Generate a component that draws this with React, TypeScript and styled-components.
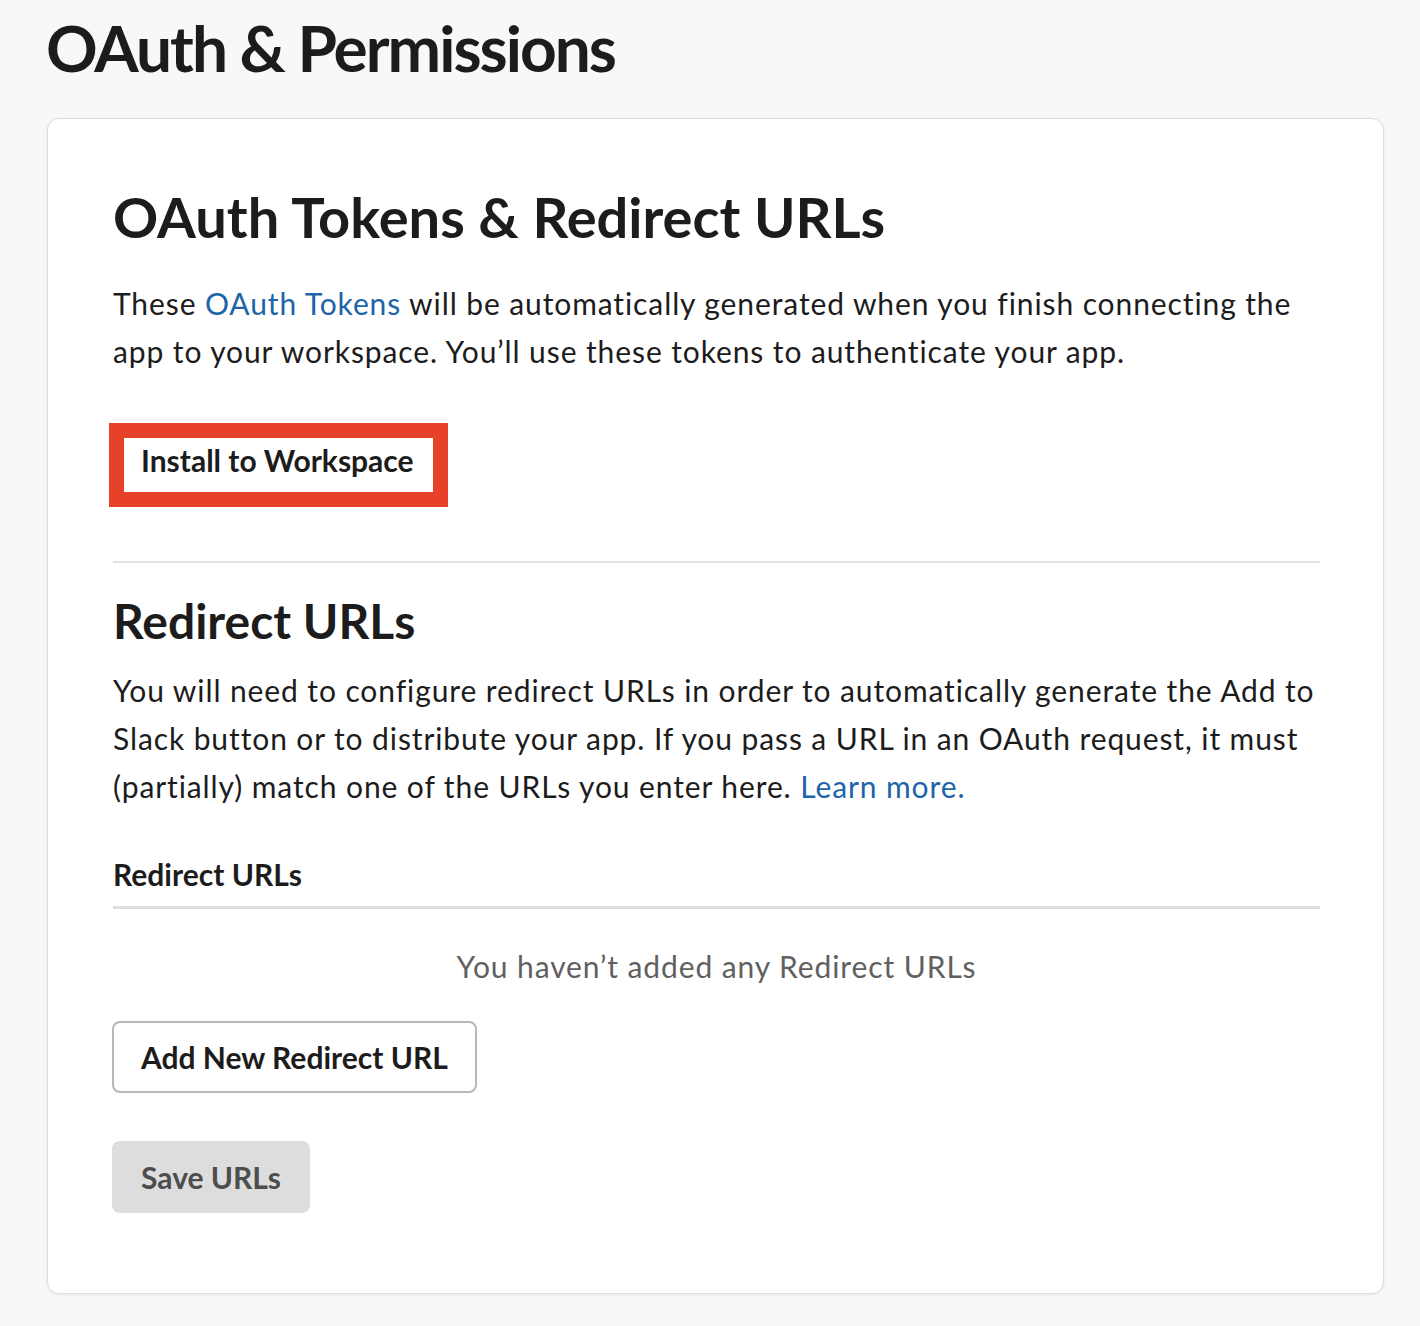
import React from "react";
import styled, { createGlobalStyle } from "styled-components";

const GlobalStyle = createGlobalStyle`
  html, body {
    margin: 0;
    padding: 0;
    background: #f8f8f8;
  }
  body {
    font-family: Lato, "Noto Sans", "Liberation Sans", sans-serif;
    color: #1d1c1d;
    -webkit-font-smoothing: antialiased;
  }
`;

const Page = styled.main`
  width: 1420px;
  min-height: 1326px;
  box-sizing: border-box;
  padding: 8px 36px 30px 47px;
`;

const PageTitle = styled.h1`
  margin: 0 0 30px -1px;
  font-size: 64px;
  line-height: 80px;
  font-weight: 700;
  letter-spacing: -2px;
  color: #1d1c1d;
`;

const Card = styled.section`
  background: #fff;
  border: 1px solid #dddddd;
  border-radius: 12px;
  box-shadow: 0 1px 3px rgba(0, 0, 0, 0.08);
  padding: 62px 63px 80px 65px;
`;

const SectionTitle = styled.h2`
  margin: 0 0 26px;
  font-size: 56px;
  line-height: 72px;
  font-weight: 700;
  color: #1d1c1d;
`;

const SubTitle = styled.h3`
  margin: 0 0 17px;
  font-size: 48px;
  line-height: 56px;
  font-weight: 700;
  color: #1d1c1d;
`;

const Text = styled.p`
  margin: 0;
  font-size: 30px;
  line-height: 48px;
  letter-spacing: 0.9px;
  color: #1d1c1d;
`;

const Link = styled.a`
  color: #1d64a8;
  text-decoration: none;
`;

const InstallButton = styled.button`
  margin: 48px 0 0 -4px;
  align-self: flex-start;
  height: 84px;
  padding: 0 19px 11px 17px;
  border: 15px solid #e8412a;
  background: #fff;
  font-family: inherit;
  font-size: 30px;
  line-height: 38px;
  font-weight: 700;
  color: #1d1c1d;
  cursor: pointer;
`;

const Divider = styled.hr`
  margin: 54px 0 30px;
  border: none;
  border-top: 2px solid #e2e2e2;
`;

const Block = styled.div`
  display: flex;
  flex-direction: column;
`;

const FieldHeader = styled.div`
  margin-top: 42px;
  padding-bottom: 10px;
  border-bottom: 3px solid #dddddd;
  font-size: 30px;
  line-height: 44px;
  font-weight: 700;
`;

const EmptyState = styled.p`
  margin: 35px 0 0;
  text-align: center;
  font-size: 30px;
  line-height: 44px;
  letter-spacing: 0.9px;
  color: #616061;
`;

const Button = styled.button<{ $muted?: boolean }>`
  align-self: flex-start;
  margin-left: -1px;
  height: 72px;
  padding: 0 ${(p) => (p.$muted ? "29px" : "27px")};
  border-radius: 8px;
  border: ${(p) => (p.$muted ? "none" : "2px solid #b8b8b8")};
  background: ${(p) => (p.$muted ? "#dddddd" : "#fff")};
  color: ${(p) => (p.$muted ? "#4d4d4d" : "#1d1c1d")};
  font-family: inherit;
  font-size: 30px;
  font-weight: 700;
  cursor: ${(p) => (p.$muted ? "default" : "pointer")};
`;

const ButtonStack = styled.div`
  display: flex;
  flex-direction: column;
  gap: 48px;
  margin-top: 33px;
`;

export default function App() {
  return (
    <>
      <GlobalStyle />
      <Page>
        <PageTitle>OAuth &amp; Permissions</PageTitle>
        <Card>
          <Block>
            <SectionTitle>OAuth Tokens &amp; Redirect URLs</SectionTitle>
            <Text>
              These <Link href="#">OAuth Tokens</Link> will be automatically
              generated when you finish connecting the app to your workspace.
              You’ll use these tokens to authenticate your app.
            </Text>
            <InstallButton>Install to Workspace</InstallButton>
          </Block>
          <Divider />
          <Block>
            <SubTitle>Redirect URLs</SubTitle>
            <Text>
              You will need to configure redirect URLs in order to automatically
              generate the Add to Slack button or to distribute your app. If you
              pass a URL in an OAuth request, it must (partially) match one of
              the URLs you enter here. <Link href="#">Learn more.</Link>
            </Text>
            <FieldHeader>Redirect URLs</FieldHeader>
            <EmptyState>You haven’t added any Redirect URLs</EmptyState>
            <ButtonStack>
              <Button>Add New Redirect URL</Button>
              <Button $muted disabled>
                Save URLs
              </Button>
            </ButtonStack>
          </Block>
        </Card>
      </Page>
    </>
  );
}
